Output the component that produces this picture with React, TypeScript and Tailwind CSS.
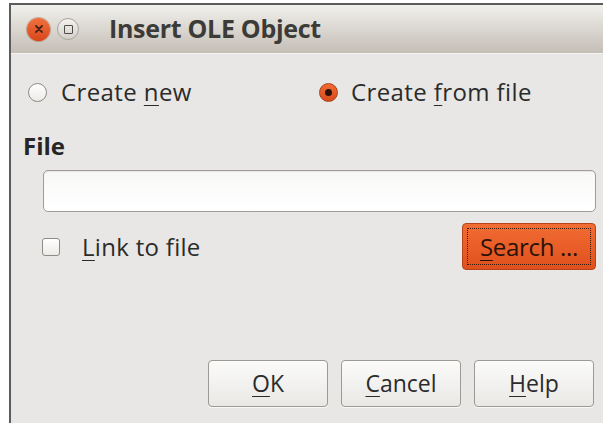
import React from "react";

const font = { fontFamily: '"Open Sans", "Noto Sans", "DejaVu Sans", sans-serif' };

function Mnemonic({ children }: { children: string }) {
  return <span className="underline decoration-1 underline-offset-[4px]">{children}</span>;
}

function DialogButton({ key_, post }: { key_: string; post: string }) {
  return (
    <button className="flex h-[47px] w-[120px] items-center justify-center rounded-[4px] border border-[#9d9a95] bg-gradient-to-b from-[#fbfbfa] to-[#e9e8e5] text-[23px] text-[#2b2b2b] shadow-[0_1px_0_rgba(255,255,255,0.7)]">
      <Mnemonic>{key_}</Mnemonic>
      {post}
    </button>
  );
}

export default function App() {
  return (
    <div className="h-[423px] w-[603px] overflow-hidden bg-white pl-[9px] pt-[3px]" style={font}>
      <div className="flex h-full flex-col border-l-2 border-t-2 border-[#5c5c5c] bg-[#e8e7e5]">
        {/* title bar */}
        <div className="flex h-[48px] items-center bg-gradient-to-b from-[#f1f0ec] to-[#c4beb6] pl-[16px]">
          <div className="flex h-[23px] w-[23px] items-center justify-center rounded-full bg-gradient-to-b from-[#f0703e] to-[#d8461a] shadow-[0_0_0_1px_rgba(150,60,20,0.35)]">
            <svg width="10" height="10" viewBox="0 0 10 10">
              <path d="M2 2 L8 8 M8 2 L2 8" stroke="#4a2218" strokeWidth="1.8" strokeLinecap="round" />
            </svg>
          </div>
          <div className="ml-[7px] flex h-[22px] w-[22px] items-center justify-center rounded-full border border-[#a9a49c] bg-gradient-to-b from-[#f3f2ef] to-[#d4d0ca]">
            <div className="h-[9px] w-[9px] rounded-[1px] border-[1.5px] border-[#4d4b48]" />
          </div>
          <span className="ml-[30px] text-[25px] font-bold tracking-[-0.3px] text-[#3c3b37]">Insert OLE Object</span>
        </div>
        <div className="h-px bg-[#f5f4f1]" />

        {/* body */}
        <div className="flex flex-1 flex-col pl-[12px] pr-[7px] text-[24px] text-[#2b2b2b]">
          <div className="mt-[23px] flex h-[30px] items-center">
            <div className="flex w-[296px] items-center">
              <div className="ml-[5px] h-[19px] w-[19px] rounded-full border border-[#8e8b86] bg-gradient-to-b from-white to-[#ecebe8]" />
              <span className="ml-[14px] tracking-[0.4px]">
                Create <Mnemonic>n</Mnemonic>ew
              </span>
            </div>
            <div className="flex items-center">
              <div className="flex h-[19px] w-[19px] items-center justify-center rounded-full border border-[#a8401a] bg-gradient-to-b from-[#f26a33] to-[#d84a1a]">
                <div className="h-[7px] w-[7px] rounded-full bg-[#2a120a]" />
              </div>
              <span className="ml-[13px] tracking-[0.4px]">
                Create <Mnemonic>f</Mnemonic>rom file
              </span>
            </div>
          </div>

          <div className="mt-[22px] font-bold leading-[34px] text-[#262626]">File</div>

          <div className="ml-[20px] mt-[7px] h-[42px] rounded-[5px] border border-[#a09c97] bg-gradient-to-b from-[#f8f8f7] to-white shadow-[inset_0_1px_1px_rgba(0,0,0,0.08)]" />

          <div className="mt-[11px] flex items-center">
            <div className="ml-[19px] h-[18px] w-[18px] rounded-[3px] border border-[#8e8b86] bg-gradient-to-b from-white to-[#ecebe8]" />
            <span className="ml-[22px] tracking-[0.3px]">
              <Mnemonic>L</Mnemonic>ink to file
            </span>
            <button className="ml-auto flex h-[47px] w-[134px] items-center justify-center rounded-[4px] border border-[#b5441a] bg-gradient-to-b from-[#f26c34] to-[#e0501c] p-[4px] text-[#2a1208]">
              <span className="flex h-full w-full items-center justify-center border border-dotted border-[#3a1a0c] tracking-[-0.3px]">
                <Mnemonic>S</Mnemonic>earch ...
              </span>
            </button>
          </div>

          <div className="mt-auto mb-[16px] flex justify-end gap-[13px] pr-[2px]">
            <DialogButton key_="O" post="K" />
            <DialogButton key_="C" post="ancel" />
            <DialogButton key_="H" post="elp" />
          </div>
        </div>
      </div>
    </div>
  );
}
